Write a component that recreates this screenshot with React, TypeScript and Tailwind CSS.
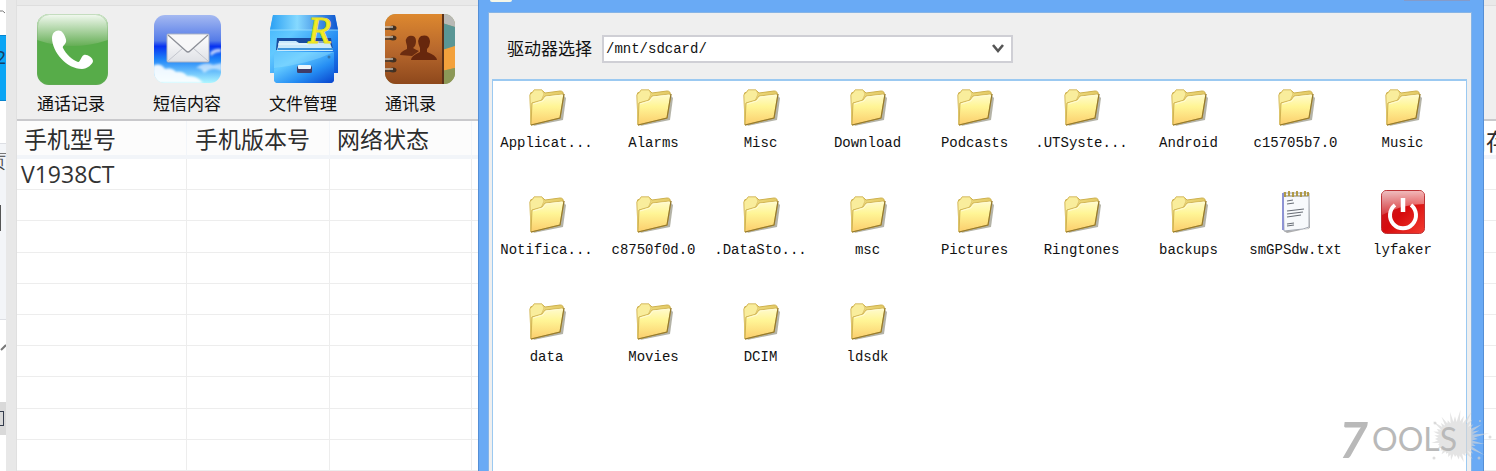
import type { ReactNode } from "react";

const cjk = "font-['Open_Sans','Noto_Sans_CJK_SC',sans-serif]";

function PhoneIcon() {
  return (
    <svg viewBox="0 0 71 71" className="size-[71px]" aria-hidden="true">
      <defs>
        <linearGradient id="phoneGloss" x1="0" y1="0" x2="0" y2="1">
          <stop offset="0" stopColor="#f4faf2" />
          <stop offset="1" stopColor="#65ae55" />
        </linearGradient>
        <clipPath id="phoneClip"><rect width="71" height="71" rx="12" /></clipPath>
      </defs>
      <g clipPath="url(#phoneClip)">
        <rect width="71" height="71" fill="#57ac49" />
        <path d="M0 0H71V26Q35 38 0 26Z" fill="url(#phoneGloss)" />
      </g>
      <rect x=".5" y=".5" width="70" height="70" rx="12" fill="none" stroke="#6fa964" strokeOpacity=".35" />
      <path d="M15 24C15 18 20 15 24 17C27 19 30 26 29 28C28 31 25 32 26 34C29 40 35 46 41 48C43 49 44 42 47 41C50 40 56 44 56 47C56 50 50 55 45 55C30 55 15 38 15 24Z" fill="#fff" />
    </svg>
  );
}

function MailIcon() {
  return (
    <svg viewBox="0 0 69 71" className="h-[71px] w-[69px]" aria-hidden="true">
      <defs>
        <linearGradient id="mailSky" x1="0" y1="0" x2="0" y2="1">
          <stop offset="0" stopColor="#a5b9f1" />
          <stop offset=".38" stopColor="#547be8" />
          <stop offset=".46" stopColor="#0732f0" />
          <stop offset=".65" stopColor="#1d82f8" />
          <stop offset="1" stopColor="#aef6ff" />
        </linearGradient>
        <linearGradient id="mailPaper" x1="0" y1="0" x2="0" y2="1">
          <stop offset="0" stopColor="#fff" />
          <stop offset="1" stopColor="#dfe1e6" />
        </linearGradient>
        <clipPath id="mailClip"><rect x="1" y="1" width="67" height="68" rx="11" /></clipPath>
        <filter id="cloudSoft"><feGaussianBlur stdDeviation="1" /></filter>
      </defs>
      <g clipPath="url(#mailClip)">
        <rect x="1" y="1" width="67" height="68" fill="url(#mailSky)" />
        <g filter="url(#cloudSoft)" fill="#fff">
          <path d="M0 52Q7 48 12 55Q19 53 23 58Q30 57 34 62Q44 61 50 69H0Z" opacity=".9" />
          <path d="M43 54Q52 47 60 51L69 49V57Q59 52 51 59Q49 54 43 54Z" opacity=".6" />
          <path d="M57 39Q61 34 68 35V38Q62 38 58 42Z" opacity=".7" />
        </g>
      </g>
      <rect x="14" y="20" width="42" height="28" rx="1" fill="url(#mailPaper)" stroke="#a9b0c2" />
      <path d="M15 47L30 34M55 47L40 34" stroke="#c3c6ce" fill="none" />
      <path d="M15 21L33 37Q35 39 37 37L55 21" fill="#f7f7f8" stroke="#8d9098" strokeWidth="1.3" />
    </svg>
  );
}

function FileIcon() {
  return (
    <svg viewBox="0 0 70 71" className="h-[71px] w-[70px] overflow-visible" aria-hidden="true">
      <defs>
        <linearGradient id="fileBody" x1="0" y1="0" x2="1" y2="1">
          <stop offset="0" stopColor="#3fb2fb" />
          <stop offset=".3" stopColor="#62c9ff" />
          <stop offset=".65" stopColor="#258df3" />
          <stop offset="1" stopColor="#0843cd" />
        </linearGradient>
        <linearGradient id="fileTop" x1="0" y1="0" x2="1" y2="0">
          <stop offset="0" stopColor="#2ba0f3" />
          <stop offset=".4" stopColor="#85d9ff" />
          <stop offset="1" stopColor="#0c55cf" />
        </linearGradient>
      </defs>
      <path d="M4 1H66L69 16V59H65V65Q65 69 61 69H9Q5 69 5 65V59H1V16Z" fill="url(#fileBody)" />
      <path d="M4 1H66L69 16H1Z" fill="url(#fileTop)" />
      <path d="M1 16H69" stroke="#9be0ff" opacity=".8" />
      <path d="M8 24H62L64 36H7Z" fill="#184c9f" />
      <path d="M10 27H27L30 29H61L64 37H8Z" fill="#c9e9fb" />
      <path d="M9 30H39L42 28H62" stroke="#f3fbff" fill="none" />
      <path d="M9 35H64" stroke="#3e95db" strokeWidth="2" />
      <path d="M5 38H65V65Q65 69 61 69H9Q5 69 5 65Z" fill="url(#fileBody)" />
      <path d="M5 38H65Q40 50 5 54Z" fill="#95e2ff" opacity=".4" />
      <rect x="28" y="52" width="15" height="7" rx="1.5" fill="#403b68" />
      <rect x="29" y="51" width="13" height="4" rx="1" fill="#edf4fa" />
      <circle cx="60" cy="43" r="1.5" fill="#3576ae" />
      <text x="39" y="29" className="font-['Liberation_Serif',serif] text-[38px] italic" fill="#f4ed27" stroke="#e6de22" strokeWidth="1">R</text>
    </svg>
  );
}

function ContactsIcon() {
  return (
    <svg viewBox="0 0 70 71" className="h-[71px] w-[70px]" aria-hidden="true">
      <defs>
        <linearGradient id="leather" x1="0" y1="0" x2="0" y2="1">
          <stop offset="0" stopColor="#dd882f" />
          <stop offset=".5" stopColor="#b9692d" />
          <stop offset="1" stopColor="#8e481c" />
        </linearGradient>
        <clipPath id="bookClip"><rect width="70" height="70" rx="11" /></clipPath>
      </defs>
      <g clipPath="url(#bookClip)">
        <rect width="70" height="70" fill="#949e5f" />
        <path d="M57 0H70V13L57 9Z" fill="#b9b9b6" />
        <path d="M57 9L70 13V32L57 37Z" fill="#5a9695" />
        <path d="M57 36L70 32V54L57 57Z" fill="#f3a13c" />
        <path d="M57 57L70 54V70H57Z" fill="#8c9857" />
        <rect width="58" height="70" fill="url(#leather)" />
        <path d="M58 0V70" stroke="#5c3118" strokeWidth="2" />
        {[13, 23, 45, 55].map((y) => (
          <g key={y}>
            <ellipse cx="8" cy={y + 1} rx="3.5" ry="2.5" fill="#46301f" />
            <path d={`M0 ${y}H8`} stroke="#c4bcb0" strokeWidth="1.5" />
            <path d={`M0 ${y + 2}H8`} stroke="#3e3933" strokeWidth="1.5" />
          </g>
        ))}
      </g>
      <path d="M15 41Q15 38 22 35V32Q19 24 24 22Q31 21 31 27Q31 32 28 34Q31 36 34 37L27 42Z" fill="#6b2c10" />
      <path d="M26 46Q26 42 35 38V34Q31 25 36 22Q44 20 45 27Q45 32 42 35V38Q51 41 52 46Z" fill="#67270d" />
    </svg>
  );
}

function FolderIcon() {
  return (
    <svg viewBox="0 0 38 38" className="size-[38px]" aria-hidden="true">
      <path d="M5 37L35 31L38 9L36 7Z" fill="#77745f" opacity=".55" />
      <path d="M2 6Q2 3 5 3L6 1H14L17 4L32 2Q36 2 35 6L32 29L3 36Z" fill="url(#folderBack)" stroke="#ceb14e" />
      <path d="M3 35L2 6L5 3L6 1H14L16 5L13 12L4 14Z" fill="#f9ed9c" stroke="#dcc36a" strokeWidth=".8" />
      <path d="M4 14L14 11L17 7L36 5L32 29L3 36Z" fill="url(#folderFront)" stroke="#c9aa48" strokeWidth=".8" />
      <path d="M5 15L15 12L18 8L34 6" stroke="#fffbd3" fill="none" />
      <path d="M36 5L32 29L3 36" stroke="#94792f" strokeWidth="1.2" fill="none" />
    </svg>
  );
}

function NotepadIcon() {
  return (
    <svg viewBox="0 0 30 44" className="h-11 w-[30px]" aria-hidden="true">
      <path d="M3 41L28 39V5L29 38L6 43Z" fill="#777" opacity=".6" />
      <path d="M2 3H28V37L22 39L3 41Z" fill="#f7f9fc" stroke="#a2a7b1" />
      <path d="M2 3V40" stroke="#8d93d4" strokeWidth="2" />
      <path d="M3 6H28" stroke="#bdbdb4" strokeWidth="2" />
      <path d="M4 2V7M8 1V6M12 2V7M16 1V6M20 2V7M24 1V6M27 2V6" stroke="#ad9438" strokeWidth="1.8" />
      <path d="M6 11L12 10M6 14L13 13M6 21L23 19M6 24L22 22M6 27L20 25M6 34L13 33M6 36L13 35" stroke="#686d76" strokeWidth="1.2" />
    </svg>
  );
}

function PowerIcon() {
  return (
    <svg viewBox="0 0 44 44" className="size-11" aria-hidden="true">
      <defs>
        <linearGradient id="redBase" x1="0" y1="0" x2="1" y2="1">
          <stop offset="0" stopColor="#c4262b" />
          <stop offset=".5" stopColor="#d60b0d" />
          <stop offset="1" stopColor="#f43c30" />
        </linearGradient>
        <linearGradient id="redGloss" x1="0" y1="0" x2="0" y2="1">
          <stop offset="0" stopColor="#fff" stopOpacity=".7" />
          <stop offset="1" stopColor="#fff" stopOpacity=".15" />
        </linearGradient>
      </defs>
      <rect x=".5" y=".5" width="43" height="43" rx="5" fill="url(#redBase)" stroke="#bb3437" />
      <path d="M1 5Q1 1 5 1H39Q43 1 43 5V14Q22 14 1 25Z" fill="url(#redGloss)" />
      <path d="M14 15A13 13 0 1 0 30 15" fill="none" stroke="#fff" strokeWidth="4" />
      <path d="M22 8V22" stroke="#fff" strokeWidth="4.5" />
    </svg>
  );
}

function FolderPaints() {
  return (
    <svg className="absolute size-0" aria-hidden="true">
      <defs>
        <linearGradient id="folderBack" x1="0" y1="0" x2="1" y2="1">
          <stop offset="0" stopColor="#f5e78e" />
          <stop offset="1" stopColor="#d2ae3f" />
        </linearGradient>
        <linearGradient id="folderFront" x1="0" y1="0" x2="0" y2="1">
          <stop offset="0" stopColor="#fffbd0" />
          <stop offset=".4" stopColor="#fff596" />
          <stop offset="1" stopColor="#fbcd6c" />
        </linearGradient>
      </defs>
    </svg>
  );
}

const tools: { label: string; icon: ReactNode }[] = [
  { label: "通话记录", icon: <PhoneIcon /> },
  { label: "短信内容", icon: <MailIcon /> },
  { label: "文件管理", icon: <FileIcon /> },
  { label: "通讯录", icon: <ContactsIcon /> },
];

const entries = [
  "Applicat...", "Alarms", "Misc", "Download", "Podcasts", ".UTSyste...", "Android", "c15705b7.0", "Music",
  "Notifica...", "c8750f0d.0", ".DataSto...", "msc", "Pictures", "Ringtones", "backups", "smGPSdw.txt", "lyfaker",
  "data", "Movies", "DCIM", "ldsdk",
];

function iconFor(name: string) {
  if (name.endsWith(".txt")) return <NotepadIcon />;
  if (name === "lyfaker") return <PowerIcon />;
  return <FolderIcon />;
}

const rows = ["V1938CT", "", "", "", "", "", "", "", "", ""];

function BackgroundEdge() {
  return (
    <div className="flex w-[6px] shrink-0 flex-col overflow-hidden bg-white text-[#444]">
      <div className="h-[35px] shrink-0">
        <svg viewBox="0 0 6 35" className="h-[35px] w-[6px]" aria-hidden="true">
          <path d="M0 11Q3 10 5 13" stroke="#777" fill="none" />
        </svg>
      </div>
      <div className="flex h-[66px] shrink-0 justify-end border-y border-[#0785cf] bg-[#0ba5f5] pt-2 text-[18px] text-[#183f63]">2</div>
      <div className="h-[42px] shrink-0" />
      <div className="flex h-[177px] shrink-0 flex-col border-y border-[#dddfe4] bg-[#f3f5f8]">
        <div className="mt-[9px] flex justify-end border-t border-[#777] text-[16px] leading-[16px]">页</div>
        <div className="mt-[35px] h-[26px] w-px bg-[#555]" />
      </div>
      <div className="h-[82px] shrink-0">
        <svg viewBox="0 0 6 82" className="h-[82px] w-[6px]" aria-hidden="true">
          <path d="M1 30L6 25" stroke="#777" strokeWidth="2" />
        </svg>
      </div>
      <div className="flex h-[33px] shrink-0 items-center justify-end bg-[#d9d9d9] pr-[2px]">
        <div className="h-[15px] w-[4px] border border-l-0 border-[#333b4c]" />
      </div>
    </div>
  );
}

function PhoneTool() {
  return (
    <main className={`flex w-[461px] shrink-0 flex-col bg-white ${cjk}`}>
      <div className="h-[6px] shrink-0 border-b border-[#dedede] bg-[#e9e9e9]" />
      <nav className="flex h-[115px] shrink-0 gap-11 border-b-2 border-[#c9c9cc] bg-[#efefef] pt-2 pl-[20px]">
        {tools.map(({ label, icon }) => (
          <button key={label} type="button" className="flex w-[72px] flex-col items-start text-[17px] leading-[20px] text-[#111]">
            <span className="flex h-[80px] justify-center">{icon}</span>
            <span className="whitespace-nowrap">{label}</span>
          </button>
        ))}
      </nav>
      <div className="min-h-0 flex-1">
        <table className="h-full w-full table-fixed border-separate border-spacing-0 text-left">
          <colgroup>
            <col className="w-[170px]" />
            <col className="w-[143px]" />
            <col className="w-[142px]" />
            <col />
          </colgroup>
          <thead>
            <tr className="h-[38px] bg-[#fcfcfc] text-[23px] leading-[32px] text-[#2d2d2d]">
              <th className="border-r border-b-4 border-[#f2f5f9] p-0 pt-[2px] pl-[7px] font-normal">手机型号</th>
              <th className="border-r border-b-4 border-[#f2f5f9] p-0 pt-[2px] pl-[8px] font-normal">手机版本号</th>
              <th className="border-r border-b-4 border-[#f2f5f9] p-0 pt-[2px] pl-[7px] font-normal">网络状态</th>
              <td className="border-b-4 border-[#f2f5f9] p-0" />
            </tr>
          </thead>
          <tbody>
            {rows.map((model, i) => (
              <tr key={i} className="h-[31px] text-[23px] leading-[28px] text-[#333]">
                <td className="border-r border-b border-[#ededed] p-0 pl-[4px]">{model}</td>
                <td className="border-r border-b border-[#ededed] p-0" />
                <td className="border-r border-b border-[#ededed] p-0" />
                <td className="border-b border-[#ededed] p-0" />
              </tr>
            ))}
          </tbody>
        </table>
      </div>
    </main>
  );
}

function FileDialog() {
  return (
    <section aria-label="/mnt/sdcard/" className="flex min-w-0 flex-1 flex-col border-x border-[#558fd6] bg-[#69aaf5] pr-[11px] pl-[9px]">
      <header className="flex h-[12px] shrink-0 items-start justify-between pr-[2px]">
        <span className="ml-[2px] h-[2px] w-[22px] rounded-b-sm bg-[#f4f6e8]" />
        <span className="h-px w-[66px] bg-[#859bc9]" />
      </header>
      <div className="flex min-h-0 flex-1 flex-col border border-b-0 border-[#86b4e6] bg-[#efefef] pr-[4px] pl-[3px]">
        <div className="flex h-[66px] shrink-0 items-start pt-[22px] pl-[15px]">
          <label htmlFor="drive" className="mr-[10px] text-[17px] leading-[26px] whitespace-nowrap text-[#111] font-['Noto_Sans_CJK_SC',sans-serif]">驱动器选择</label>
          <div className="relative w-[411px]">
            <select id="drive" className="block h-[28px] w-full appearance-none border-2 border-[#cfcfd5] bg-white pl-[2px] text-[14px] leading-[20px] text-[#111] font-['Liberation_Mono',monospace]">
              <option>/mnt/sdcard/</option>
            </select>
            <svg viewBox="0 0 12 10" className="pointer-events-none absolute top-[9px] right-[9px] h-[10px] w-[12px]" aria-hidden="true">
              <path d="M1 1L6 7L11 1" fill="none" stroke="#555" strokeWidth="2.6" />
            </svg>
          </div>
        </div>
        <div className="min-h-0 flex-1 border border-t-2 border-b-0 border-[#9bc9f1] bg-white">
          <ul className="grid grid-cols-[repeat(auto-fill,107px)]">
            {entries.map((name) => (
              <li key={name} className="h-[107px]">
                <button type="button" className="flex w-full flex-col items-center pt-[2px] text-[14px] leading-[16px] text-[#111] font-['Liberation_Mono',monospace]">
                  <span className="mb-[8px] flex h-[44px] items-end">{iconFor(name)}</span>
                  <span>{name}</span>
                </button>
              </li>
            ))}
          </ul>
        </div>
      </div>
    </section>
  );
}

function RightEdge() {
  return (
    <div className={`flex w-[12px] shrink-0 flex-col overflow-hidden bg-white text-[#2d2d2d] ${cjk}`}>
      <div className="h-[6px] shrink-0 border-b border-[#dedede] bg-[#e9e9e9]" />
      <div className="h-[115px] shrink-0 border-b-2 border-[#c9c9cc] bg-[#efefef]" />
      <div className="h-[38px] shrink-0 border-b-4 border-[#f2f5f9] pt-[2px] text-[23px] leading-[36px] whitespace-nowrap">
        <span className="-ml-[21px]">内存</span>
      </div>
      {rows.map((_, i) => (
        <div key={i} className="flex-1 border-b border-[#ededed]" />
      ))}
    </div>
  );
}

const spikes = [
  23, 17, 30, 18, 22, 18, 34, 18, 24, 17, 28, 18, 21, 17, 26, 18, 22, 17, 19, 16, 23, 17, 20, 16,
  18, 16, 21, 17, 19, 16, 20, 17, 18, 16, 24, 17, 20, 17, 21, 16, 23, 18, 21, 17, 29, 18, 22, 17,
  27, 18, 21, 17, 29, 18, 24, 18, 31, 19, 26, 18, 33, 19, 27, 18, 24, 18, 31, 19, 26, 18, 35, 19,
];

const splat = spikes
  .map((radius, i) => {
    const angle = (i / spikes.length) * Math.PI * 2;
    return `${(26 + Math.cos(angle) * radius).toFixed(1)},${(30 + Math.sin(angle) * radius * 0.95).toFixed(1)}`;
  })
  .join(" ");

function Watermark() {
  return (
    <div className="pointer-events-none absolute right-[3px] bottom-[2px] flex h-[60px] w-[154px] items-center text-[#b9b9b9]">
      <svg viewBox="0 0 64 60" className="absolute right-0 h-[60px] w-[64px]" aria-hidden="true">
        <polygon points={splat} fill="#d6d6d6" opacity=".65" />
        <g fill="#cfcfcf" opacity=".7">
          <circle cx="5" cy="49" r="1.5" />
          <circle cx="61" cy="28" r="1.5" />
          <circle cx="51" cy="12" r="1" />
          <circle cx="6" cy="14" r="1.5" />
          <circle cx="50" cy="49" r="1.5" />
        </g>
      </svg>
      <span className="relative flex items-center leading-none">
        <span className="text-[50px] font-bold italic font-['Lato',sans-serif]">7</span>
        <span className="pl-[4px] text-[32px] font-['Lato',sans-serif]">OOLS</span>
      </span>
    </div>
  );
}

export default function App() {
  return (
    <div className="relative flex h-screen min-h-[420px] overflow-hidden bg-white">
      <FolderPaints />
      <BackgroundEdge />
      <div className="w-[11px] shrink-0 border-r border-[#e0e0e0] bg-[#e8e8e8]" />
      <PhoneTool />
      <FileDialog />
      <RightEdge />
      <Watermark />
    </div>
  );
}
